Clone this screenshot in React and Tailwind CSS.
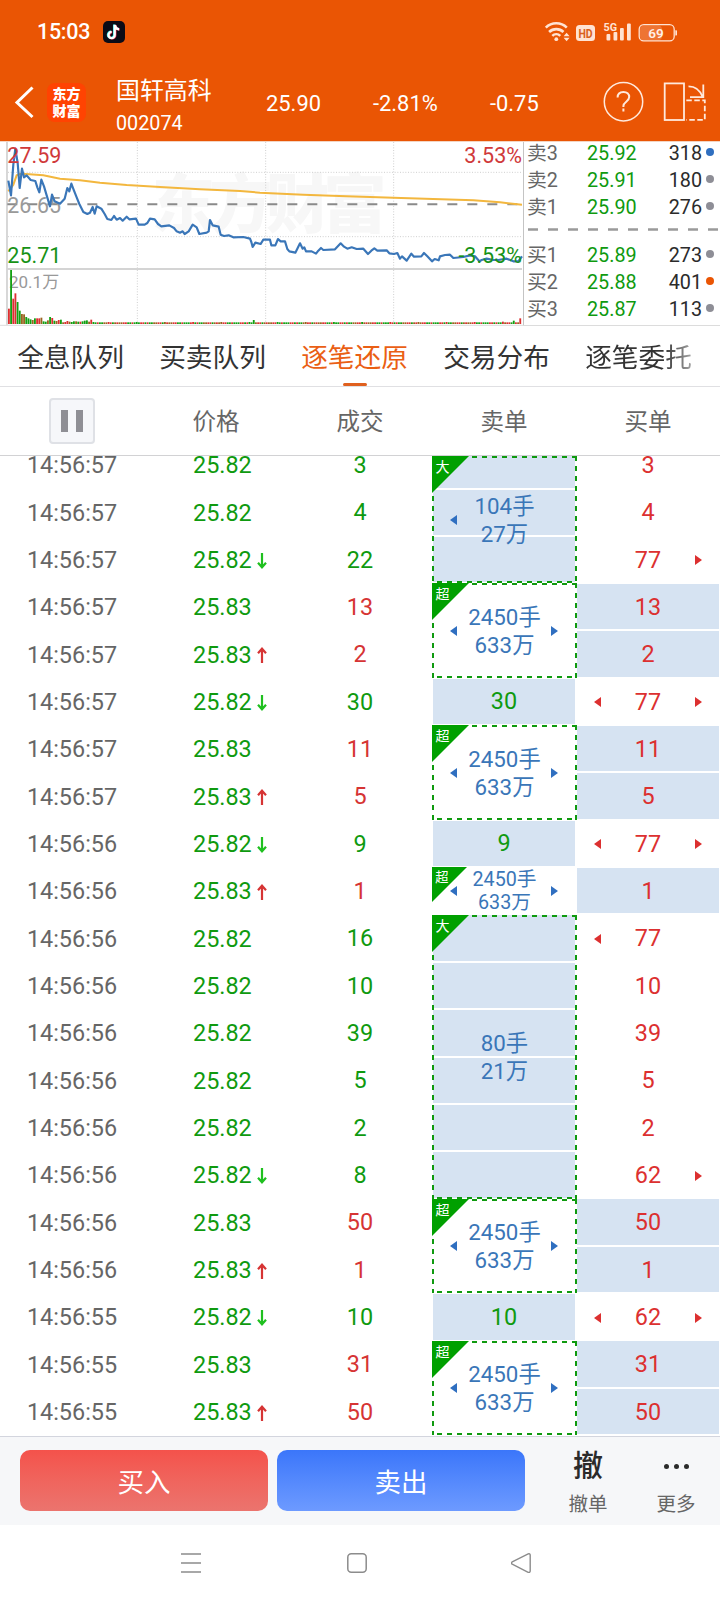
const ROW = 47.34;

const tabs = ['全息队列', '买卖队列', '逐笔还原', '交易分布', '逐笔委托'];

const asks = [
  { name: '卖3', price: '25.92', volume: 318, dot: 'bg-[#2f6fc0]' },
  { name: '卖2', price: '25.91', volume: 180, dot: 'bg-[#8e8e96]' },
  { name: '卖1', price: '25.90', volume: 276, dot: 'bg-[#8e8e96]' },
];

const bids = [
  { name: '买1', price: '25.89', volume: 273, dot: 'bg-[#8e8e96]' },
  { name: '买2', price: '25.88', volume: 401, dot: 'bg-[#ea5504]' },
  { name: '买3', price: '25.87', volume: 113, dot: 'bg-[#8e8e96]' },
];

// trend: 'up' | 'down'; side: active buy ('b') or active sell ('s')
const trades = [
  { time: '14:56:57', price: '25.82', volume: 3, side: 's', buy: 3 },
  { time: '14:56:57', price: '25.82', volume: 4, side: 's', buy: 4 },
  { time: '14:56:57', price: '25.82', trend: 'down', volume: 22, side: 's', buy: 77, next: true },
  { time: '14:56:57', price: '25.83', volume: 13, side: 'b', buy: 13 },
  { time: '14:56:57', price: '25.83', trend: 'up', volume: 2, side: 'b', buy: 2 },
  { time: '14:56:57', price: '25.82', trend: 'down', volume: 30, side: 's', buy: 77, prev: true, next: true },
  { time: '14:56:57', price: '25.83', volume: 11, side: 'b', buy: 11 },
  { time: '14:56:57', price: '25.83', trend: 'up', volume: 5, side: 'b', buy: 5 },
  { time: '14:56:56', price: '25.82', trend: 'down', volume: 9, side: 's', buy: 77, prev: true, next: true },
  { time: '14:56:56', price: '25.83', trend: 'up', volume: 1, side: 'b', buy: 1 },
  { time: '14:56:56', price: '25.82', volume: 16, side: 's', buy: 77, prev: true },
  { time: '14:56:56', price: '25.82', volume: 10, side: 's', buy: 10 },
  { time: '14:56:56', price: '25.82', volume: 39, side: 's', buy: 39 },
  { time: '14:56:56', price: '25.82', volume: 5, side: 's', buy: 5 },
  { time: '14:56:56', price: '25.82', volume: 2, side: 's', buy: 2 },
  { time: '14:56:56', price: '25.82', trend: 'down', volume: 8, side: 's', buy: 62, next: true },
  { time: '14:56:56', price: '25.83', volume: 50, side: 'b', buy: 50 },
  { time: '14:56:56', price: '25.83', trend: 'up', volume: 1, side: 'b', buy: 1 },
  { time: '14:56:55', price: '25.82', trend: 'down', volume: 10, side: 's', buy: 62, prev: true, next: true },
  { time: '14:56:55', price: '25.83', volume: 31, side: 'b', buy: 31 },
  { time: '14:56:55', price: '25.83', trend: 'up', volume: 50, side: 'b', buy: 50 },
];

const sells = [
  { span: 3, cut: 14.7, tag: '大', filled: true, lines: ['104手', '27万'], prev: true },
  { span: 2, tag: '超', lines: ['2450手', '633万'], prev: true, next: true },
  { span: 1, value: 30 },
  { span: 2, tag: '超', lines: ['2450手', '633万'], prev: true, next: true },
  { span: 1, value: 9 },
  { span: 1, tag: '超', lines: ['2450手', '633万'], prev: true, next: true },
  { span: 6, tag: '大', filled: true, lines: ['80手', '21万'] },
  { span: 2, tag: '超', lines: ['2450手', '633万'], prev: true, next: true },
  { span: 1, value: 10 },
  { span: 2, tag: '超', lines: ['2450手', '633万'], prev: true, next: true },
];

const priceLine =
  '25,128 33,172 40,80 46,32 53,75 59,150 66,92 72,118 80,112 92,126 106,129 112,148 118,163 124,125 132,145 140,172 150,205 156,170 164,190 180,197 194,182 202,150 208,160 214,137 222,158 230,178 238,198 250,222 262,228 270,224 278,207 284,227 290,205 304,212 314,228 322,243 334,246 342,234 350,245 360,240 368,248 380,236 388,244 408,242 416,260 434,260 442,255 450,242 464,244 474,258 484,265 508,262 522,270 530,280 540,284 548,280 554,288 566,280 578,260 590,268 598,288 620,284 626,280 630,246 638,262 656,266 662,290 672,294 686,292 700,298 730,297 750,302 754,312 758,327 766,314 782,318 790,305 810,305 814,322 826,322 834,303 842,310 855,310 862,333 868,340 886,344 892,332 900,316 908,332 913,328 918,340 935,340 948,347 955,338 963,330 970,336 1005,334 1022,316 1032,326 1042,332 1055,328 1070,333 1090,332 1104,348 1114,338 1123,331 1132,338 1160,337 1168,346 1182,348 1192,345 1200,362 1206,355 1220,368 1234,347 1242,356 1264,355 1272,345 1282,355 1296,370 1304,363 1316,367 1320,355 1335,351 1350,350 1360,360 1390,357 1410,352 1425,355 1438,370 1445,366 1460,362 1480,366 1495,366 1520,362 1540,370 1555,370 1566,355';

const averageLine =
  '25,160 40,140 50,112 60,108 78,108 130,112 180,122 240,127 300,134 380,141 480,147 600,154 720,159 780,164 910,170 1040,175 1180,179 1300,183 1420,187 1500,193 1566,200';

const volumes = [
  [46, 'r'], [162, 'g'], [76, 'r'], [92, 'r'], [66, 'g'], [40, 'g'], [30, 'm'], [29, 'm'], [21, 'g'], [17, 'g'],
  [14, 'g'], [12, 'm'], [17, 'g'], [17, 'r'], [17, 'r'], [19, 'm'], [8, 'g'], [7, 'g'], [11, 'm'], [21, 'g'],
  [18, 'r'], [10, 'g'], [9, 'm'], [12, 'r'], [13, 'g'], [5, 'm'], [6, 'r'], [9, 'r'], [7, 'm'], [6, 'g'],
  [8, 'g'], [8, 'm'], [7, 'g'], [7, 'r'], [8, 'g'], [10, 'g'], [11, 'g'], [7, 'm'], [13, 'r'], [6, 'g'],
];
const pattern = 'rgmggrrmgrgrrmgmgrmgrrg';
while (volumes.length < 237) {
  const i = volumes.length;
  volumes.push([i % 13 === 7 ? 6 : 5, pattern[(i * 5) % pattern.length]]);
}
volumes[113] = [12, 'g'];
volumes[228] = [7, 'r'];
volumes[233] = [10, 'g'];
volumes[236] = [17, 'r'];
const volumeColors = { r: '#dc3030', g: '#12a012', m: '#9a6420' };

function StatusBar() {
  return (
    <div className="flex h-[62px] items-center pl-[37px] pr-[43px] pt-[2px]">
      <span className="text-[21.5px] font-medium tracking-[-0.3px]">15:03</span>
      <svg className="ml-[13px] h-[22px] w-[22px]" viewBox="0 0 22 22" fill="none">
        <rect width="22" height="22" rx="5" fill="#0b0b16" />
        <g strokeWidth="2.3">
          <path d="M11.1 3.4v10.3a3.1 3.1 0 1 1-3.1-3.1M11.4 4.2c.3 2.3 1.9 3.6 4.1 3.8" stroke="#27e5e8" />
          <path d="M12.3 4v10.3a3.1 3.1 0 1 1-3.1-3.1M12.6 4.8c.3 2.3 1.9 3.6 4.1 3.8" stroke="#f6345a" />
          <path d="M11.7 3.7V14a3.1 3.1 0 1 1-3.1-3.1M12 4.5c.3 2.3 1.9 3.6 4.1 3.8" stroke="#fff" />
        </g>
      </svg>
      <svg className="ml-auto h-[22px] w-[134px] text-[#ffe3d3]" viewBox="543 20 134 22" fill="none">
        <g stroke="currentColor" strokeWidth="2.6">
          <path d="M545.8 26.6a15 15 0 0 1 21 0" />
          <path d="M549.1 31a10.4 10.4 0 0 1 14.4 0" />
          <path d="M552.3 34.9a5.8 5.8 0 0 1 8 0" />
        </g>
        <circle cx="556.3" cy="38.2" r="1.9" fill="currentColor" />
        <path d="m566.6 31.8 3 3.4h-6zM566.6 40.2l3-3.4h-6z" fill="currentColor" />
        <rect x="576" y="24" width="19" height="16" rx="3.5" fill="currentColor" />
        <text x="578.4" y="36.800" fontSize="13" fontWeight="700" fill="#d9601c" textLength="14.2" lengthAdjust="spacingAndGlyphs">HD</text>
        <text x="603.5" y="30" fontSize="11.5" fontWeight="700" fill="currentColor" textLength="13.5" lengthAdjust="spacingAndGlyphs">5G</text>
        <g fill="currentColor">
          <rect x="606.5" y="33" width="3.8" height="6.5" rx="1" />
          <rect x="613.5" y="31" width="3.8" height="8.5" rx="1" />
          <rect x="620" y="27" width="3.8" height="12.5" rx="1" />
          <rect x="627" y="22.5" width="3.8" height="17" rx="1" />
        </g>
        <rect x="640" y="24.500" width="22" height="14.8" rx="4" fill="#ee7433" />
        <rect x="639.2" y="23.700" width="35" height="16.2" rx="4.5" stroke="currentColor" strokeWidth="1.3" />
        <path d="M675.3 29.3h1a.7.7 0 0 1 .7.7v3.8a.7.7 0 0 1-.7.7h-1z" fill="currentColor" />
        <text x="656" y="36.500" textAnchor="middle" fontSize="13.5" fontWeight="600" fill="#fff0e8">69</text>
      </svg>
    </div>
  );
}

function Header() {
  return (
    <header className="h-[141px] bg-[#ea5504] text-white">
      <StatusBar />
      <div className="flex h-[79px] items-center text-[21.9px] leading-none">
        <svg className="ml-[14px] h-[34px] w-[21px]" viewBox="0 0 21 34" fill="none" stroke="#fff" strokeWidth="3">
          <path d="M18.5 2.5 3 17.5l15.5 14.5" />
        </svg>
        <div className="ml-[12px] mt-[1px] flex h-[39px] w-[39px] flex-col items-center justify-center rounded-[8px] bg-[#ff4302] pt-[1px] text-[14px] font-black leading-[16.5px]">
          <span>东方</span>
          <span>财富</span>
        </div>
        <div className="ml-[30px] w-[150px] pt-[12px]">
          <div className="text-[23.9px] leading-[33px]">国轩高科</div>
          <div className="text-[19.8px] leading-[32px]">002074</div>
        </div>
        <span className="w-[107px] pt-[5px]">25.90</span>
        <span className="w-[117px] pt-[5px]">-2.81%</span>
        <span className="pt-[5px]">-0.75</span>
        <svg className="ml-auto mr-[14px] mt-[1px] h-[42px] w-[104px]" viewBox="602 82 104 42" fill="none" stroke="#ffe9dc" strokeWidth="1.5">
          <circle cx="623.5" cy="102.7" r="19.2" />
          <path d="M617.6 98.5c0-3.6 2.4-5.6 5.8-5.6s5.8 2 5.8 5.2c0 4.6-5.8 4.6-5.8 9v.8M623.4 109.6v2.8" strokeWidth="2" />
          <rect x="664.7" y="84.4" width="19.3" height="36.6" strokeWidth="1.8" />
          <path d="M688.5 87.3c6.500 0 11.500 3.700 14 10.500M703.300 85.500v12.700h-13.300" strokeWidth="1.800" />
          <path d="M686.300 101.300h18.500v19.500h-18.500" strokeWidth="1.800" strokeDasharray="5.500 2.500" />
        </svg>
      </div>
    </header>
  );
}

// One chart unit is a third of a pixel
function TrendChart() {
  return (
    <svg className="h-[184px] w-[524px] shrink-0" viewBox="0 12 1572 552" fill="none">
      <text x="455" y="266" fontSize="190" fontWeight="900" fill="#f7f7f7" textLength="705">东方财富</text>
      <g stroke="#cfcfcf" strokeWidth="3" strokeDasharray="3 5">
        <path d="M24 103H1566M24 296H1566M412 12V558M797 12V558M1181 12V558" />
      </g>
      <path d="M21 12V560" stroke="#c4c4c4" strokeWidth="4" />
      <path d="M21 393H1566" stroke="#d4d4d4" strokeWidth="6" />
      <path d="M1571 12V564" stroke="#c4c4c4" strokeWidth="4" />
      <path d="M0 562H1572" stroke="#dcdcdc" strokeWidth="3" />
      <path d="M22 199H1566" stroke="#8a8a8a" strokeWidth="6" strokeDasharray="30 30" />
      <text x="22" y="225" fontSize="64" fill="#999" textLength="161">26.65</text>
      <polyline points={averageLine} stroke="#f3b73e" strokeWidth="6" />
      <polyline points={priceLine} stroke="#3a76b8" strokeWidth="6.500" strokeLinejoin="round" />
      <g fontSize="64.500">
        <text x="22" y="75" fill="#d0393a">27.59</text>
        <text x="22" y="376" fill="#169216">25.71</text>
        <text x="1566" y="75" fill="#d0393a" textAnchor="end">3.53%</text>
        <text x="1566" y="376" fill="#169216" textAnchor="end">-3.53%</text>
      </g>
      <text x="27" y="450" fontSize="51" fill="#999">20.1万</text>
      {volumes.map(([h, c], i) => (
        <rect key={i} x={24 + i * 6.5} y={558 - h} width="5.500" height={h} fill={volumeColors[c]} />
      ))}
    </svg>
  );
}

function QuoteRow({ name, price, volume, dot }) {
  return (
    <div className="flex h-[27px] items-center text-[19.800px] leading-none">
      <span className="w-[60px] text-[#666]">{name}</span>
      <span className="text-[#0f9a0f]">{price}</span>
      <span className="ml-auto text-[#2b2b2b]">{volume}</span>
      <span className={`mb-[4px] ml-[4px] h-[8px] w-[8px] rounded-full ${dot}`} />
    </div>
  );
}

function OrderBook() {
  return (
    <div className="flex-1 border-b border-[#dcdcdc] pl-[3px] pr-[6px]">
      <div className="-mt-[2px]">
        {asks.map((q) => <QuoteRow key={q.name} {...q} />)}
      </div>
      <svg className="-mr-[6px] ml-[1px] block h-[21px] w-[192px]" viewBox="0 0 192 21">
        <path d="M0 8.500H192" stroke="#9a9a9a" strokeWidth="2.500" strokeDasharray="10 10" />
      </svg>
      <div>
        {bids.map((q) => <QuoteRow key={q.name} {...q} />)}
      </div>
    </div>
  );
}

function Tabs() {
  return (
    <nav className="flex h-[61px] gap-[34px] overflow-hidden border-b border-[#e0e0e3] pl-[17px]">
      {tabs.map((tab, i) => (
        <div
          key={tab}
          className={`flex w-[108px] shrink-0 flex-col items-center whitespace-nowrap text-[26.700px] leading-[64px] ${
            i === 2 ? 'text-[#ea5f14]' : i === 4 ? 'bg-linear-to-r from-[#333] from-72% to-[#aaa] bg-clip-text text-transparent' : 'text-[#333]'
          }`}
        >
          <span className="h-[57px] pr-[1px]">{tab}</span>
          {i === 2 && <span className="h-[3px] w-[24px] rounded-full bg-[#e0601e]" />}
        </div>
      ))}
    </nav>
  );
}

function TableHead() {
  return (
    <div className="grid h-[69px] grid-cols-5 items-center border-b border-[#d2d2d4] text-center text-[23.500px] text-[#666]">
      <div className="ml-[49px] flex h-[46px] w-[46px] items-center justify-center gap-[8px] rounded-[4px] border-2 border-[#dfe1e6] bg-[#f6f7fa]">
        <span className="h-[22px] w-[7px] bg-[#8f8f95]" />
        <span className="h-[22px] w-[7px] bg-[#8f8f95]" />
      </div>
      <span className="pt-[4px]">价格</span>
      <span className="pt-[4px]">成交</span>
      <span className="pt-[4px]">卖单</span>
      <span className="pt-[4px]">买单</span>
    </div>
  );
}

function TrendArrow({ up }) {
  return (
    <svg className="ml-[5px] h-[16px] w-[10px]" viewBox="0 0 10 16" fill="none" stroke={up ? '#d63434' : '#1fc01f'} strokeWidth="2.200">
      <path d={up ? 'M5 16V1.500M1 6.200l4-4.500 4 4.500' : 'M5 0v14.500M1 9.800l4 4.500 4-4.500'} />
    </svg>
  );
}

function Pointer({ right, className }) {
  return (
    <svg className={`absolute h-[10px] w-[7px] -translate-y-1/2 ${className}`} viewBox="0 0 7 10" fill="currentColor">
      <path d={right ? 'M0 0l7 5-7 5z' : 'M7 0L0 5l7 5z'} />
    </svg>
  );
}

function SellBlock({ span, cut = 0, tag, filled, lines, prev, next, value }) {
  const height = span * ROW - cut;

  if (value) {
    return (
      <div className="flex shrink-0 pb-[1px] pl-[1px] pr-[2px] pt-[1px]" style={{ height }}>
        <div className="flex flex-1 items-center justify-center bg-[#d6e3f2] pt-[1px] text-[#0f9a0f]">{value}</div>
      </div>
    );
  }

  const single = span === 1;
  return (
    <div className="relative shrink-0" style={{ height }}>
      {filled && (
        <div className="flex h-full flex-col gap-[2px] pl-[1px] pr-[2px]">
          {Array.from({ length: span }, (_, i) => (
            <div key={i} className="bg-[#d6e3f2]" style={{ height: ROW - 2 - (i === 0 ? cut - 1 : 0) }} />
          ))}
        </div>
      )}
      {/* dashed frame: 5px dash, 5px gap on each edge */}
      {!single && (
        <div className="absolute bottom-0 left-0 right-0 top-0 bg-[linear-gradient(90deg,#0f9a0f_50%,transparent_50%),linear-gradient(90deg,#0f9a0f_50%,transparent_50%),linear-gradient(#0f9a0f_50%,transparent_50%),linear-gradient(#0f9a0f_50%,transparent_50%)] bg-[length:10px_2px,10px_2px,2px_10px,2px_10px] bg-[position:0_0,5px_100%,0_0,100%_0] [background-repeat:repeat-x,repeat-x,repeat-y,repeat-y]" />
      )}
      <svg className={`absolute left-0 top-0 ${single ? 'h-[35px] w-[35px]' : 'h-[37px] w-[37px]'}`} viewBox="0 0 37 37">
        <path d="M0 0h37L0 37z" fill="#00a000" />
        <text x="10.500" y="16" textAnchor="middle" fontSize="14" fill="#fff">{tag}</text>
      </svg>
      <div
        className={`absolute inset-0 flex flex-col items-center justify-center text-[#3a76b8] ${
          single ? 'pt-[1px] text-[19.700px] leading-[23px]' : 'text-[22.300px] leading-[28px]'
        }`}
      >
        {lines.map((line) => <span key={line}>{line}</span>)}
      </div>
      <span className="text-[#2f6fc0]">
        {prev && <Pointer className="left-[18px] top-1/2" />}
        {next && <Pointer right className="right-[19px] top-1/2" />}
      </span>
    </div>
  );
}

function TradeList() {
  return (
    <div className="flex h-[980px] overflow-hidden text-[23.400px] leading-none">
      <div className="-mt-[15px] w-[432px]">
        {trades.map((t, i) => (
          <div key={i} className="grid grid-cols-3 items-center" style={{ height: ROW }}>
            <span className="pt-[3px] text-center text-[#666]">{t.time}</span>
            <span className="flex items-center pl-[49px] pt-[3px] text-[#0f9a0f]">
              {t.price}
              {t.trend && <TrendArrow up={t.trend === 'up'} />}
            </span>
            <span className={`pt-[2px] text-center ${t.side === 'b' ? 'text-[#d63434]' : 'text-[#0f9a0f]'}`}>{t.volume}</span>
          </div>
        ))}
      </div>
      <div className="flex w-[145px] flex-col">
        {sells.map((s, i) => <SellBlock key={i} {...s} />)}
      </div>
      <div className="-mt-[15px] w-[142px]">
        {trades.map((t, i) => (
          <div key={i} className="relative py-[1px] text-[#dc3030]" style={{ height: ROW }}>
            <div className={`flex h-full items-center justify-center pt-[2px] ${t.side === 'b' ? 'bg-[#d6e3f2]' : ''}`}>{t.buy}</div>
            {t.prev && <Pointer className="left-[17px] top-[52%]" />}
            {t.next && <Pointer right className="right-[17px] top-[52%]" />}
          </div>
        ))}
      </div>
    </div>
  );
}

function ActionBar() {
  return (
    <div className="flex h-[89px] border-t border-[#d3d5de] bg-[#f6f7f9] pl-[20px] pt-[13px]">
      <button className="h-[61px] w-[248px] rounded-[10px] bg-linear-to-b from-[#f4524b] to-[#eb746e] pt-[4px] text-[26.500px] text-white">买入</button>
      <button className="ml-[9px] h-[61px] w-[248px] rounded-[10px] bg-linear-to-b from-[#3b76fa] to-[#6d9aff] pt-[4px] text-[26.500px] text-white">卖出</button>
      <div className="ml-[19px] flex w-[88px] flex-col items-center">
        <span className="text-[30px] font-medium leading-[32px] text-[#2b2b2b]">撤</span>
        <span className="mt-[8px] text-[19.500px] leading-[29px] text-[#666]">撤单</span>
      </div>
      <div className="flex w-[88px] flex-col items-center">
        <span className="flex h-[32px] items-center gap-[5px]">
          <i className="h-[5px] w-[5px] rounded-full bg-[#2b2b2b]" />
          <i className="h-[5px] w-[5px] rounded-full bg-[#2b2b2b]" />
          <i className="h-[5px] w-[5px] rounded-full bg-[#2b2b2b]" />
        </span>
        <span className="mt-[8px] text-[19.500px] leading-[29px] text-[#666]">更多</span>
      </div>
    </div>
  );
}

function SystemNav() {
  return (
    <div className="flex h-[75px] items-center pl-[181px]">
      <svg className="h-[22px] w-[20px]" viewBox="0 0 20 22" stroke="#8c8c8c" strokeWidth="1.600">
        <path d="M0 2h20M0 11h20M0 20h20" />
      </svg>
      <svg className="ml-[146px] h-[20px] w-[20px]" viewBox="0 0 20 20" fill="none" stroke="#8c8c8c" strokeWidth="1.500">
        <rect x=".8" y=".8" width="18.400" height="18.400" rx="3.500" />
      </svg>
      <svg className="ml-[144px] h-[20px] w-[20px]" viewBox="0 0 20 20" fill="none" stroke="#8c8c8c" strokeWidth="1.400" strokeLinejoin="round">
        <path d="M1.200 8.900 17.200.9c1-.5 2 .1 2 1.200v16c0 1.100-1 1.700-2 1.200L1.200 11.200c-.9-.5-.9-1.800 0-2.300z" />
      </svg>
    </div>
  );
}

export default function App() {
  return (
    <div className="h-[1600px] w-[720px] overflow-hidden bg-white font-[Roboto,'Noto_Sans_CJK_SC',sans-serif]">
      <Header />
      <div className="flex h-[185px] border-t border-[#f3d5c3]">
        <TrendChart />
        <OrderBook />
      </div>
      <Tabs />
      <TableHead />
      <TradeList />
      <ActionBar />
      <SystemNav />
    </div>
  );
}
